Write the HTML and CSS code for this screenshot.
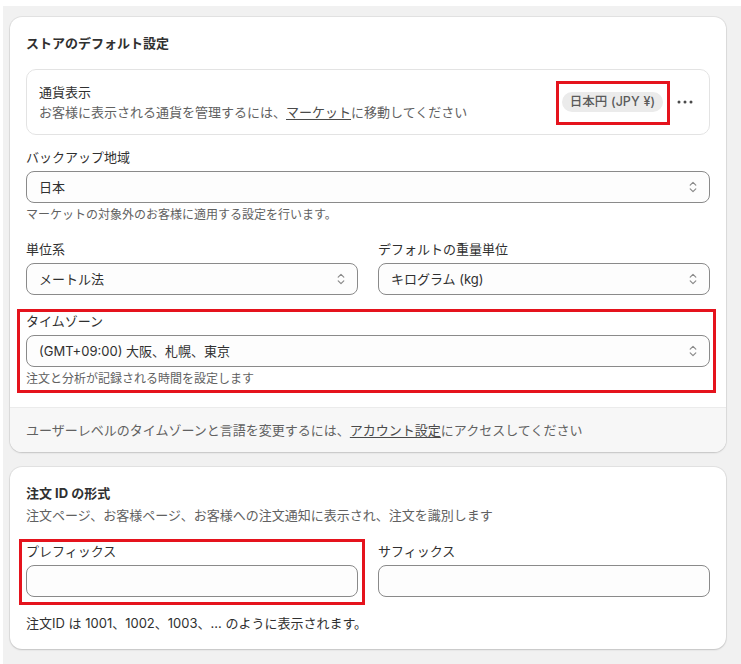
FILE: index.html
```html
<!DOCTYPE html>
<html lang="ja">
<head>
<meta charset="utf-8">
<link rel="stylesheet" href="styles.css">
</head>
<body>
<div class="page">
  <section class="card">
    <div class="card-body">
      <h2 class="card-title">ストアのデフォルト設定</h2>
      <div class="currency-box">
        <div class="currency-text">
          <div class="strong-line">通貨表示</div>
          <div class="sub-line">お客様に表示される通貨を管理するには、<a class="link">マーケット</a>に移動してください</div>
        </div>
        <div class="currency-actions">
          <span class="badge-wrap hl hl-badge"><span class="badge">日本円 (JPY ¥)</span></span>
          <span class="dots" aria-label="more">
            <svg width="16" height="4" viewBox="0 0 16 4"><circle cx="2" cy="2" r="1.5" fill="#4a4a4a"/><circle cx="8" cy="2" r="1.5" fill="#4a4a4a"/><circle cx="14" cy="2" r="1.5" fill="#4a4a4a"/></svg>
          </span>
        </div>
      </div>

      <div class="field field-backup">
        <label class="label">バックアップ地域</label>
        <div class="select"><span>日本</span><svg class="chev" width="8" height="12" viewBox="0 0 8 12"><path d="M1.2 4.2 4 1.4l2.8 2.8M1.2 7.8 4 10.6l2.8-2.8" fill="none" stroke="#8a8a8a" stroke-width="1.2" stroke-linecap="round" stroke-linejoin="round"/></svg></div>
        <div class="help">マーケットの対象外のお客様に適用する設定を行います。</div>
      </div>

      <div class="row">
        <div class="field">
          <label class="label">単位系</label>
          <div class="select"><span>メートル法</span><svg class="chev" width="8" height="12" viewBox="0 0 8 12"><path d="M1.2 4.2 4 1.4l2.8 2.8M1.2 7.8 4 10.6l2.8-2.8" fill="none" stroke="#8a8a8a" stroke-width="1.2" stroke-linecap="round" stroke-linejoin="round"/></svg></div>
        </div>
        <div class="field">
          <label class="label">デフォルトの重量単位</label>
          <div class="select"><span>キログラム (kg)</span><svg class="chev" width="8" height="12" viewBox="0 0 8 12"><path d="M1.2 4.2 4 1.4l2.8 2.8M1.2 7.8 4 10.6l2.8-2.8" fill="none" stroke="#8a8a8a" stroke-width="1.2" stroke-linecap="round" stroke-linejoin="round"/></svg></div>
        </div>
      </div>

      <div class="field hl hl-tz">
        <label class="label">タイムゾーン</label>
        <div class="select"><span>(GMT+09:00) 大阪、札幌、東京</span><svg class="chev" width="8" height="12" viewBox="0 0 8 12"><path d="M1.2 4.2 4 1.4l2.8 2.8M1.2 7.8 4 10.6l2.8-2.8" fill="none" stroke="#8a8a8a" stroke-width="1.2" stroke-linecap="round" stroke-linejoin="round"/></svg></div>
        <div class="help">注文と分析が記録される時間を設定します</div>
      </div>
    </div>
    <div class="card-footer">ユーザーレベルのタイムゾーンと言語を変更するには、<a class="link">アカウント設定</a>にアクセスしてください</div>
  </section>

  <section class="card">
    <div class="card-body card-body-2">
      <h2 class="card-title">注文 ID の形式</h2>
      <p class="desc">注文ページ、お客様ページ、お客様への注文通知に表示され、注文を識別します</p>
      <div class="row row-2">
        <div class="field hl hl-prefix">
          <label class="label">プレフィックス</label>
          <div class="input"></div>
        </div>
        <div class="field">
          <label class="label">サフィックス</label>
          <div class="input"></div>
        </div>
      </div>
      <p class="note">注文ID は 1001、1002、1003、... のように表示されます。</p>
    </div>
  </section>
</div>
</body>
</html>
```

FILE: styles.css
```css
* { box-sizing: border-box; }
html, body { margin: 0; padding: 0; }
body {
  background: #ffffff;
  font-family: Inter, "Noto Sans CJK JP", sans-serif;
  font-size: 13px;
  line-height: 20px;
  color: #303030;
}
.page {
  margin: 6px 0 0 3px;
  background: #f1f1f1;
  padding: 11px 15px 14px 7px;
  display: flex;
  flex-direction: column;
  gap: 15px;
  min-height: 658px;
}
.card {
  background: #fff;
  border-radius: 12px;
  box-shadow: 0 0 0 1px rgba(0,0,0,0.06), 0 1px 2px rgba(0,0,0,0.14);
  overflow: hidden;
}
.card-body {
  padding: 16px 16px 20px;
  display: flex;
  flex-direction: column;
}
.card-title {
  margin: 0 0 16px;
  font-size: 13px;
  line-height: 20px;
  font-weight: 650;
  color: #303030;
}
.currency-box {
  border: 1px solid #e3e3e3;
  border-radius: 10px;
  padding: 12px 12px;
  display: flex;
  align-items: center;
  justify-content: space-between;
  margin-bottom: 12px;
}
.strong-line { color: #303030; }
.sub-line { color: #616161; }
.link { color: #303030; text-decoration: underline; text-underline-offset: 2px; }
.sub-line .link { color: #4a4a4a; }
.currency-actions {
  display: flex;
  align-items: center;
  gap: 10px;
}
.badge-wrap { display: inline-flex; }
.badge {
  display: inline-block;
  background: #ebebeb;
  color: #5a5a5a;
  border-radius: 10px;
  padding: 1px 8px;
  font-size: 12.5px;
  line-height: 18px;
  font-weight: 500;
  word-spacing: 0.5px;
}
.dots {
  width: 24px;
  height: 24px;
  display: inline-flex;
  align-items: center;
  justify-content: center;
}
.hl { position: relative; }
.hl::after {
  content: "";
  position: absolute;
  border: 3px solid #e5131d;
  pointer-events: none;
}
.hl-badge::after { top: -11px; left: -6px; right: -7px; bottom: -13px; }
.hl-tz::after { top: -2px; left: -9px; right: -6px; bottom: -6px; }
.hl-prefix::after { top: -2px; left: -7px; right: -7px; bottom: -8px; }

.field {
  display: flex;
  flex-direction: column;
}
.label {
  color: #303030;
  margin-bottom: 4px;
}
.select, .input {
  height: 32px;
  border: 1px solid #8a8a8a;
  border-radius: 8px;
  background: #fdfdfd;
}
.select {
  display: flex;
  align-items: center;
  justify-content: space-between;
  padding: 0 12px 0 12px;
  color: #303030;
}
.help {
  margin-top: 4px;
  font-size: 12px;
  line-height: 16px;
  color: #616161;
}
.row {
  display: grid;
  grid-template-columns: 1fr 1fr;
  gap: 20px;
  margin-top: 16px;
  margin-bottom: 16px;
}
.card-footer {
  background: #f7f7f7;
  border-top: 1px solid #ebebeb;
  padding: 12px 16px;
  color: #616161;
}
.card-footer .link { color: #4a4a4a; }
.card-body-2 { padding: 16px 16px 16px; }
.card-body-2 .card-title { margin-bottom: 2px; }
.desc { margin: 0; color: #616161; }
.row-2 { margin-top: 16px; margin-bottom: 16px; }
.input { height: 32px; }
.note { margin: 0; color: #303030; }
```
